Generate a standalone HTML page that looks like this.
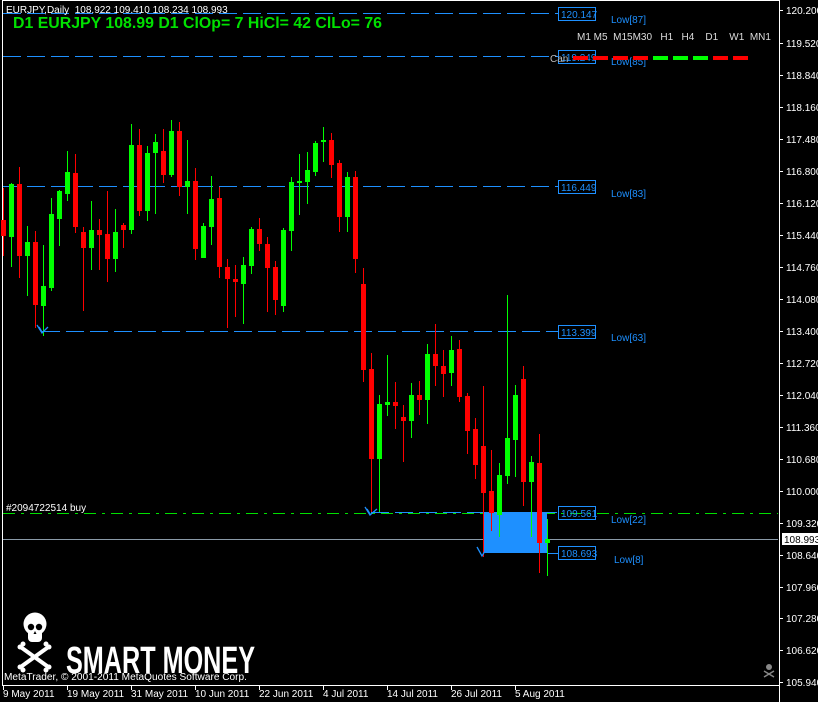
<!DOCTYPE html>
<html><head><meta charset="utf-8"><style>
html,body{margin:0;padding:0;background:#000;width:818px;height:702px;overflow:hidden}
svg{display:block}
text{font-family:"Liberation Sans",sans-serif}
</style></head><body>
<svg width="818" height="702" viewBox="0 0 818 702" xmlns="http://www.w3.org/2000/svg" shape-rendering="crispEdges">
<rect width="818" height="702" fill="#000"/>
<!-- frame -->
<rect x="2" y="0" width="1" height="686" fill="#fff"/>
<rect x="2" y="685" width="778" height="1" fill="#fff"/>
<rect x="779" y="0" width="1" height="702" fill="#fff"/>
<rect x="2" y="0" width="778" height="1" fill="#fff"/>

<!-- horizontal level lines -->
<g stroke="#1e90ff" stroke-width="1" stroke-dasharray="18 6" fill="none">
<path d="M3 13.5H558"/>
<path d="M3 56.5H558"/>
<path d="M3 186.5H558"/>
<path d="M42 331.5H558"/>
<path d="M371 512.5H558"/>
</g>
<path d="M3 513.5H778" stroke="#00e000" stroke-dasharray="12 6 3 6" fill="none"/>
<path d="M3 539.5H778" stroke="#8a9aa8" fill="none"/>
<path d="M547 553.5H558" stroke="#1e90ff" fill="none"/>

<!-- blue box -->
<rect x="483" y="512" width="64" height="41" fill="#1e90ff"/>

<!-- candles -->
<g id="c">
<rect x="3" y="188" width="1" height="68" fill="#f00"/><rect x="1" y="220" width="5" height="16" fill="#f00"/>
<rect x="11" y="183" width="1" height="84" fill="#0f0"/><rect x="9" y="184" width="5" height="53" fill="#0f0"/>
<rect x="19" y="167" width="1" height="111" fill="#f00"/><rect x="17" y="184" width="5" height="72" fill="#f00"/>
<rect x="27" y="226" width="1" height="70" fill="#0f0"/><rect x="25" y="242" width="5" height="14" fill="#0f0"/>
<rect x="35" y="231" width="1" height="97" fill="#f00"/><rect x="33" y="242" width="5" height="63" fill="#f00"/>
<rect x="43" y="245" width="1" height="91" fill="#0f0"/><rect x="41" y="286" width="5" height="20" fill="#0f0"/>
<rect x="51" y="198" width="1" height="93" fill="#0f0"/><rect x="49" y="214" width="5" height="74" fill="#0f0"/>
<rect x="59" y="190" width="1" height="56" fill="#0f0"/><rect x="57" y="191" width="5" height="28" fill="#0f0"/>
<rect x="67" y="151" width="1" height="50" fill="#0f0"/><rect x="65" y="172" width="5" height="22" fill="#0f0"/>
<rect x="75" y="154" width="1" height="79" fill="#f00"/><rect x="73" y="173" width="5" height="54" fill="#f00"/>
<rect x="83" y="227" width="1" height="84" fill="#f00"/><rect x="81" y="232" width="5" height="16" fill="#f00"/>
<rect x="91" y="201" width="1" height="69" fill="#0f0"/><rect x="89" y="230" width="5" height="18" fill="#0f0"/>
<rect x="99" y="219" width="1" height="51" fill="#f00"/><rect x="97" y="230" width="5" height="5" fill="#f00"/>
<rect x="107" y="191" width="1" height="91" fill="#f00"/><rect x="105" y="234" width="5" height="25" fill="#f00"/>
<rect x="115" y="209" width="1" height="63" fill="#0f0"/><rect x="113" y="232" width="5" height="27" fill="#0f0"/>
<rect x="123" y="223" width="1" height="25" fill="#f00"/><rect x="121" y="225" width="5" height="5" fill="#f00"/>
<rect x="131" y="124" width="1" height="110" fill="#0f0"/><rect x="129" y="145" width="5" height="85" fill="#0f0"/>
<rect x="139" y="129" width="1" height="87" fill="#f00"/><rect x="137" y="145" width="5" height="66" fill="#f00"/>
<rect x="147" y="146" width="1" height="75" fill="#0f0"/><rect x="145" y="153" width="5" height="58" fill="#0f0"/>
<rect x="155" y="134" width="1" height="80" fill="#0f0"/><rect x="153" y="142" width="5" height="11" fill="#0f0"/>
<rect x="163" y="129" width="1" height="54" fill="#f00"/><rect x="161" y="151" width="5" height="24" fill="#f00"/>
<rect x="171" y="120" width="1" height="57" fill="#0f0"/><rect x="169" y="131" width="5" height="44" fill="#0f0"/>
<rect x="179" y="122" width="1" height="74" fill="#f00"/><rect x="177" y="131" width="5" height="56" fill="#f00"/>
<rect x="187" y="140" width="1" height="74" fill="#0f0"/><rect x="185" y="181" width="5" height="6" fill="#0f0"/>
<rect x="195" y="168" width="1" height="92" fill="#f00"/><rect x="193" y="181" width="5" height="68" fill="#f00"/>
<rect x="203" y="223" width="1" height="35" fill="#0f0"/><rect x="201" y="226" width="5" height="32" fill="#0f0"/>
<rect x="211" y="176" width="1" height="69" fill="#0f0"/><rect x="209" y="199" width="5" height="28" fill="#0f0"/>
<rect x="219" y="187" width="1" height="91" fill="#f00"/><rect x="217" y="198" width="5" height="69" fill="#f00"/>
<rect x="227" y="259" width="1" height="69" fill="#f00"/><rect x="225" y="267" width="5" height="12" fill="#f00"/>
<rect x="235" y="265" width="1" height="52" fill="#f00"/><rect x="233" y="279" width="5" height="3" fill="#f00"/>
<rect x="243" y="257" width="1" height="67" fill="#0f0"/><rect x="241" y="265" width="5" height="19" fill="#0f0"/>
<rect x="251" y="227" width="1" height="47" fill="#0f0"/><rect x="249" y="229" width="5" height="37" fill="#0f0"/>
<rect x="259" y="218" width="1" height="33" fill="#f00"/><rect x="257" y="229" width="5" height="15" fill="#f00"/>
<rect x="267" y="237" width="1" height="75" fill="#f00"/><rect x="265" y="244" width="5" height="24" fill="#f00"/>
<rect x="275" y="261" width="1" height="54" fill="#f00"/><rect x="273" y="267" width="5" height="33" fill="#f00"/>
<rect x="283" y="228" width="1" height="84" fill="#0f0"/><rect x="281" y="230" width="5" height="76" fill="#0f0"/>
<rect x="291" y="177" width="1" height="74" fill="#0f0"/><rect x="289" y="182" width="5" height="49" fill="#0f0"/>
<rect x="299" y="154" width="1" height="61" fill="#0f0"/><rect x="297" y="181" width="5" height="2" fill="#0f0"/>
<rect x="307" y="152" width="1" height="52" fill="#0f0"/><rect x="305" y="170" width="5" height="12" fill="#0f0"/>
<rect x="315" y="141" width="1" height="35" fill="#0f0"/><rect x="313" y="143" width="5" height="29" fill="#0f0"/>
<rect x="323" y="127" width="1" height="35" fill="#0f0"/><rect x="321" y="140" width="5" height="2" fill="#0f0"/>
<rect x="331" y="133" width="1" height="45" fill="#f00"/><rect x="329" y="140" width="5" height="25" fill="#f00"/>
<rect x="339" y="160" width="1" height="72" fill="#f00"/><rect x="337" y="163" width="5" height="54" fill="#f00"/>
<rect x="347" y="172" width="1" height="60" fill="#0f0"/><rect x="345" y="177" width="5" height="40" fill="#0f0"/>
<rect x="355" y="171" width="1" height="102" fill="#f00"/><rect x="353" y="177" width="5" height="82" fill="#f00"/>
<rect x="363" y="268" width="1" height="114" fill="#f00"/><rect x="361" y="284" width="5" height="86" fill="#f00"/>
<rect x="371" y="353" width="1" height="159" fill="#f00"/><rect x="369" y="369" width="5" height="90" fill="#f00"/>
<rect x="379" y="395" width="1" height="117" fill="#0f0"/><rect x="377" y="404" width="5" height="55" fill="#0f0"/>
<rect x="387" y="355" width="1" height="61" fill="#0f0"/><rect x="385" y="402" width="5" height="3" fill="#0f0"/>
<rect x="395" y="382" width="1" height="47" fill="#f00"/><rect x="393" y="402" width="5" height="4" fill="#f00"/>
<rect x="403" y="405" width="1" height="57" fill="#f00"/><rect x="401" y="417" width="5" height="4" fill="#f00"/>
<rect x="411" y="383" width="1" height="55" fill="#0f0"/><rect x="409" y="395" width="5" height="26" fill="#0f0"/>
<rect x="419" y="381" width="1" height="34" fill="#f00"/><rect x="417" y="395" width="5" height="5" fill="#f00"/>
<rect x="427" y="344" width="1" height="80" fill="#0f0"/><rect x="425" y="354" width="5" height="46" fill="#0f0"/>
<rect x="435" y="324" width="1" height="62" fill="#f00"/><rect x="433" y="354" width="5" height="12" fill="#f00"/>
<rect x="443" y="350" width="1" height="47" fill="#f00"/><rect x="441" y="366" width="5" height="8" fill="#f00"/>
<rect x="451" y="336" width="1" height="50" fill="#0f0"/><rect x="449" y="350" width="5" height="23" fill="#0f0"/>
<rect x="459" y="340" width="1" height="62" fill="#f00"/><rect x="457" y="349" width="5" height="48" fill="#f00"/>
<rect x="467" y="393" width="1" height="61" fill="#f00"/><rect x="465" y="396" width="5" height="35" fill="#f00"/>
<rect x="475" y="418" width="1" height="61" fill="#f00"/><rect x="473" y="429" width="5" height="36" fill="#f00"/>
<rect x="483" y="386" width="1" height="171" fill="#f00"/><rect x="481" y="446" width="5" height="47" fill="#f00"/>
<rect x="491" y="450" width="1" height="81" fill="#f00"/><rect x="489" y="491" width="5" height="22" fill="#f00"/>
<rect x="499" y="463" width="1" height="74" fill="#0f0"/><rect x="497" y="475" width="5" height="40" fill="#0f0"/>
<rect x="507" y="295" width="1" height="189" fill="#0f0"/><rect x="505" y="438" width="5" height="38" fill="#0f0"/>
<rect x="515" y="385" width="1" height="92" fill="#0f0"/><rect x="513" y="395" width="5" height="45" fill="#0f0"/>
<rect x="523" y="366" width="1" height="140" fill="#f00"/><rect x="521" y="379" width="5" height="103" fill="#f00"/>
<rect x="531" y="456" width="1" height="81" fill="#0f0"/><rect x="529" y="462" width="5" height="20" fill="#0f0"/>
<rect x="539" y="434" width="1" height="139" fill="#f00"/><rect x="537" y="463" width="5" height="80" fill="#f00"/>
<rect x="547" y="519" width="1" height="57" fill="#0f0"/><rect x="545" y="539" width="5" height="4" fill="#0f0"/>
</g>

<!-- arrows -->
<g stroke="#1e90ff" stroke-width="1.3" fill="none" shape-rendering="auto">
<path d="M37 325 L42 333 L48 327 M39 327 L42 332"/>
<path d="M365 507 L370 515 L377 509 M367 509 L370 514"/>
<path d="M477 547 L482 556 L485 551"/>
</g>

<!-- price boxes -->
<g font-size="10" fill="#1e90ff">
<rect x="558.5" y="7.5" width="37" height="13" fill="none" stroke="#1e90ff"/><text x="561" y="18">120.147</text>
<rect x="558.5" y="50.5" width="37" height="13" fill="none" stroke="#1e90ff"/><text x="561" y="61">119.249</text>
<rect x="558.5" y="180.5" width="37" height="13" fill="none" stroke="#1e90ff"/><text x="561" y="191">116.449</text>
<rect x="558.5" y="325.5" width="37" height="13" fill="none" stroke="#1e90ff"/><text x="561" y="336">113.399</text>
<rect x="558.5" y="506.5" width="37" height="13" fill="none" stroke="#1e90ff"/><text x="561" y="517">109.561</text>
<rect x="558.5" y="546.5" width="37" height="13" fill="none" stroke="#1e90ff"/><text x="561" y="557">108.693</text>
<text x="611" y="23">Low[87]</text>
<text x="611" y="65">Low[85]</text>
<text x="611" y="197">Low[83]</text>
<text x="611" y="341">Low[63]</text>
<text x="611" y="523">Low[22]</text>
<text x="614" y="563">Low[8]</text>
</g>
<text x="550" y="62" font-size="10" fill="#bbb">Can</text>

<!-- timeframe panel -->
<text x="577" y="40" font-size="10" fill="#ddd" xml:space="preserve">M1 M5  M15M30   H1   H4    D1    W1  MN1</text>
<g>
<rect x="573" y="56" width="15" height="4" fill="#f00"/>
<rect x="593" y="56" width="15" height="4" fill="#f00"/>
<rect x="613" y="56" width="15" height="4" fill="#f00"/>
<rect x="633" y="56" width="15" height="4" fill="#f00"/>
<rect x="653" y="56" width="15" height="4" fill="#0f0"/>
<rect x="673" y="56" width="15" height="4" fill="#0f0"/>
<rect x="693" y="56" width="15" height="4" fill="#0f0"/>
<rect x="713" y="56" width="15" height="4" fill="#f00"/>
<rect x="733" y="56" width="15" height="4" fill="#f00"/>
</g>

<!-- header -->
<text x="6" y="13" font-size="10" fill="#fff" xml:space="preserve">EURJPY,Daily  108.922 109.410 108.234 108.993</text>
<text x="13" y="28" font-size="16" font-weight="bold" fill="#00e000" textLength="369" lengthAdjust="spacingAndGlyphs">D1 EURJPY 108.99 D1 ClOp= 7 HiCl= 42 ClLo= 76</text>
<text x="6" y="511" font-size="10" fill="#fff">#2094722514 buy</text>

<!-- price axis -->
<g font-size="10" fill="#fff">
<text x="786" y="14">120.200</text><rect x="780" y="10" width="3" height="1"/>
<text x="786" y="47">119.520</text><rect x="780" y="43" width="3" height="1"/>
<text x="786" y="79">118.840</text><rect x="780" y="75" width="3" height="1"/>
<text x="786" y="111">118.160</text><rect x="780" y="107" width="3" height="1"/>
<text x="786" y="143">117.480</text><rect x="780" y="139" width="3" height="1"/>
<text x="786" y="175">116.800</text><rect x="780" y="171" width="3" height="1"/>
<text x="786" y="207">116.120</text><rect x="780" y="203" width="3" height="1"/>
<text x="786" y="239">115.440</text><rect x="780" y="235" width="3" height="1"/>
<text x="786" y="271">114.760</text><rect x="780" y="267" width="3" height="1"/>
<text x="786" y="303">114.080</text><rect x="780" y="299" width="3" height="1"/>
<text x="786" y="335">113.400</text><rect x="780" y="331" width="3" height="1"/>
<text x="786" y="367">112.720</text><rect x="780" y="363" width="3" height="1"/>
<text x="786" y="399">112.040</text><rect x="780" y="395" width="3" height="1"/>
<text x="786" y="431">111.360</text><rect x="780" y="427" width="3" height="1"/>
<text x="786" y="463">110.680</text><rect x="780" y="459" width="3" height="1"/>
<text x="786" y="495">110.000</text><rect x="780" y="491" width="3" height="1"/>
<text x="786" y="527">109.320</text><rect x="780" y="523" width="3" height="1"/>
<text x="786" y="559">108.640</text><rect x="780" y="555" width="3" height="1"/>
<text x="786" y="591">107.960</text><rect x="780" y="587" width="3" height="1"/>
<text x="786" y="622">107.280</text><rect x="780" y="618" width="3" height="1"/>
<text x="786" y="654">106.620</text><rect x="780" y="650" width="3" height="1"/>
<text x="786" y="686">105.940</text><rect x="780" y="682" width="3" height="1"/>
</g>
<rect x="782" y="533" width="36" height="12" fill="#fff"/>
<text x="784" y="543" font-size="10" fill="#000">108.993</text>

<!-- date axis -->
<g font-size="10" fill="#fff">
<rect x="3" y="686" width="1" height="4"/><text x="3" y="697">9 May 2011</text>
<rect x="67" y="686" width="1" height="4"/><text x="67" y="697">19 May 2011</text>
<rect x="131" y="686" width="1" height="4"/><text x="131" y="697">31 May 2011</text>
<rect x="195" y="686" width="1" height="4"/><text x="195" y="697">10 Jun 2011</text>
<rect x="259" y="686" width="1" height="4"/><text x="259" y="697">22 Jun 2011</text>
<rect x="323" y="686" width="1" height="4"/><text x="323" y="697">4 Jul 2011</text>
<rect x="387" y="686" width="1" height="4"/><text x="387" y="697">14 Jul 2011</text>
<rect x="451" y="686" width="1" height="4"/><text x="451" y="697">26 Jul 2011</text>
<rect x="515" y="686" width="1" height="4"/><text x="515" y="697">5 Aug 2011</text>
</g>

<!-- skull logo -->
<g fill="#fff" shape-rendering="auto">
<path d="M22 648 L47 666" stroke="#fff" stroke-width="4" stroke-linecap="round"/>
<path d="M47 648 L22 666" stroke="#fff" stroke-width="4" stroke-linecap="round"/>
<circle cx="20" cy="647" r="2.5"/><circle cx="23" cy="644" r="2.5"/>
<circle cx="49" cy="647" r="2.5"/><circle cx="46" cy="644" r="2.5"/>
<circle cx="20" cy="667" r="2.5"/><circle cx="23" cy="670" r="2.5"/>
<circle cx="49" cy="667" r="2.5"/><circle cx="46" cy="670" r="2.5"/>
<circle cx="35" cy="624" r="11.5"/>
<rect x="28" y="628" width="14" height="14" rx="4"/>
<circle cx="31" cy="627" r="3.2" fill="#000"/>
<circle cx="39" cy="627" r="3.2" fill="#000"/>
<path d="M35 631 l-1.5 3 h3z" fill="#000"/>
</g>
<text x="66" y="673" font-size="38" font-weight="bold" fill="#fff" textLength="189" lengthAdjust="spacingAndGlyphs">SMART MONEY</text>
<text x="4" y="680" font-size="10" fill="#fff" textLength="243" lengthAdjust="spacingAndGlyphs">MetaTrader, © 2001-2011 MetaQuotes Software Corp.</text>

<!-- small gray skull -->
<g fill="#888" shape-rendering="auto">
<circle cx="769" cy="667" r="3"/>
<path d="M764 671 L774 677 M774 671 L764 677" stroke="#888" stroke-width="1.5"/>
</g>
</svg>
</body></html>
